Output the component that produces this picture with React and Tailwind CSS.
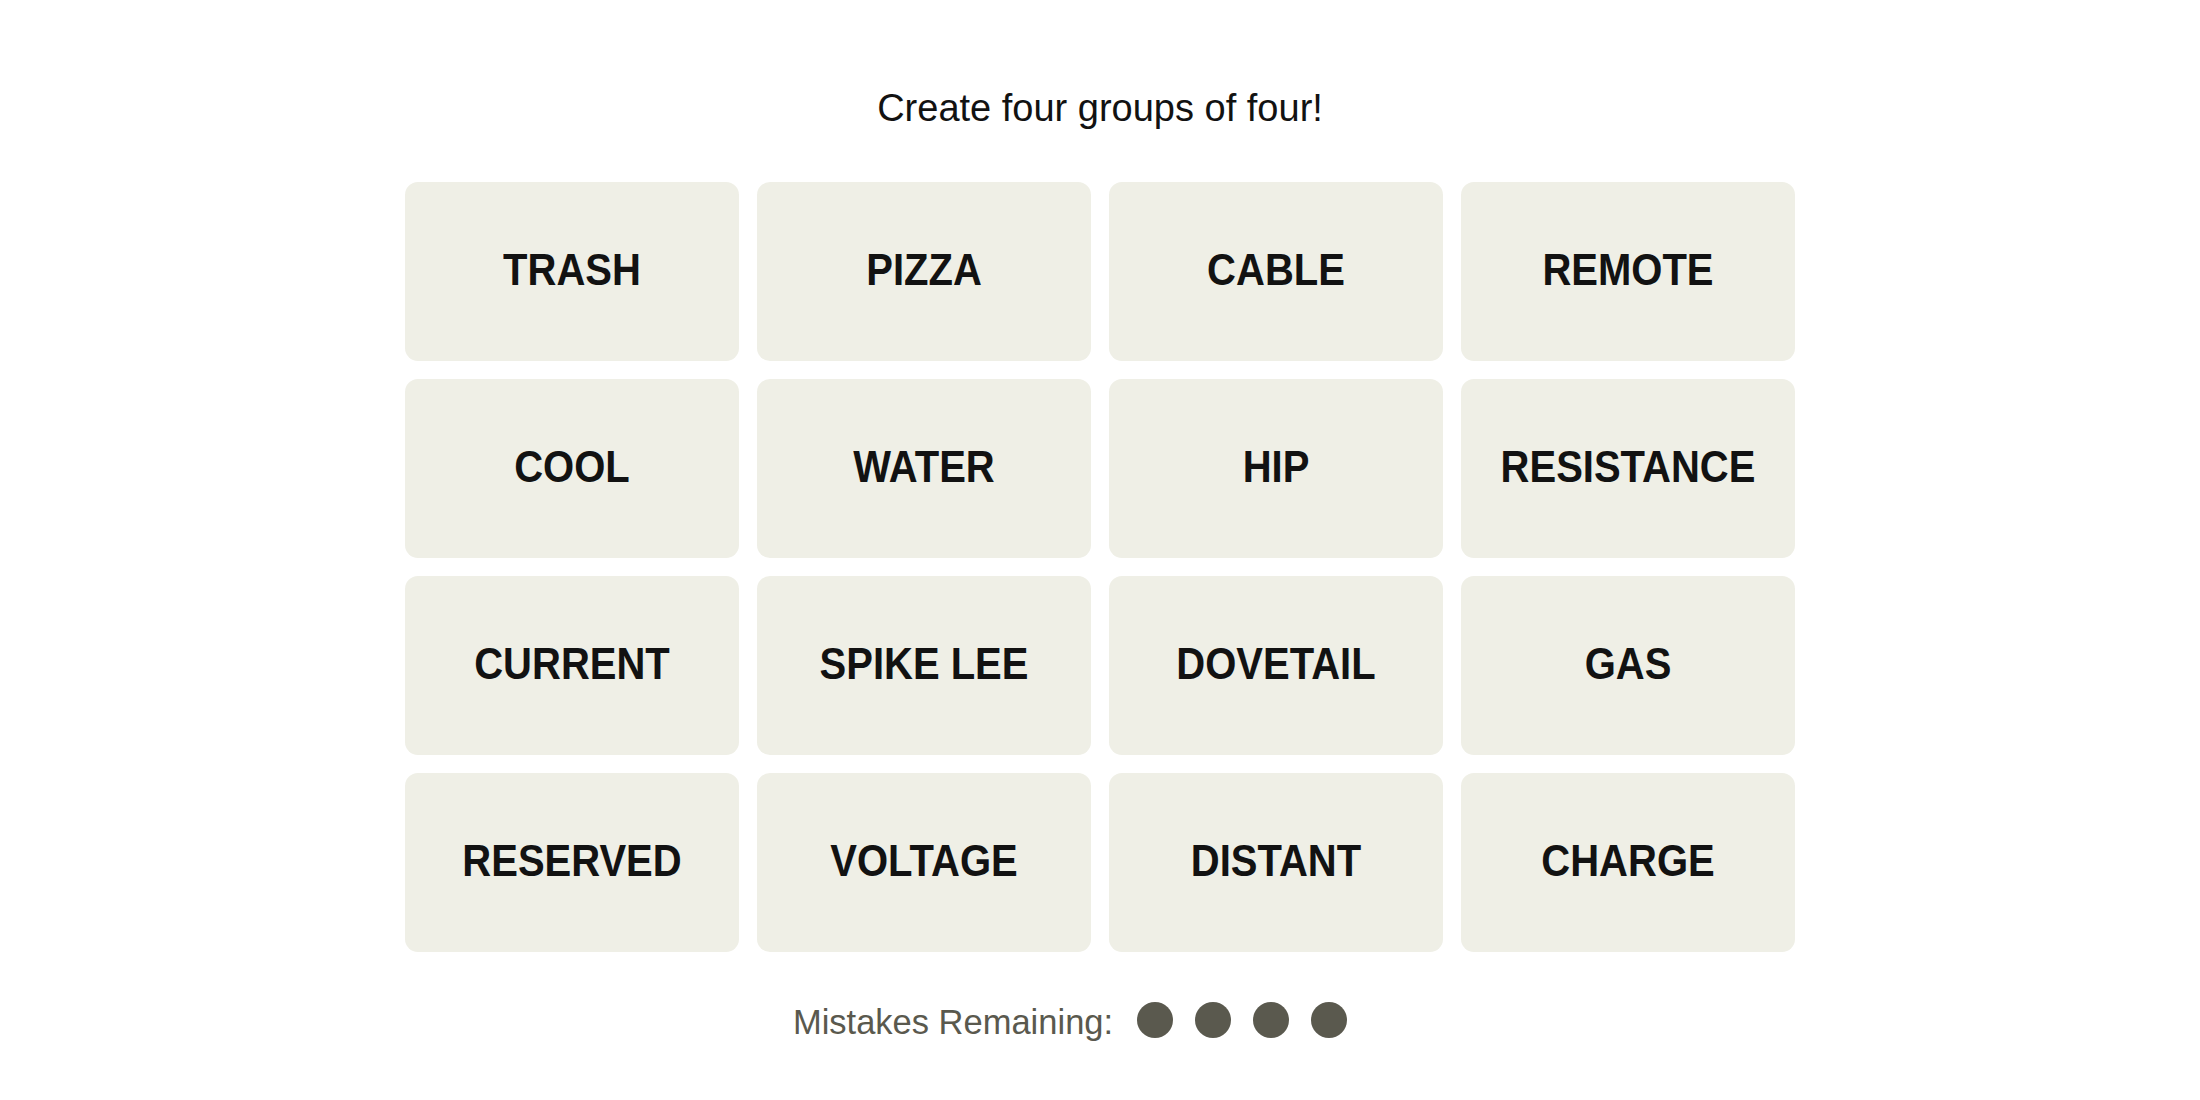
import React from "react";

const WORDS = [
  "TRASH", "PIZZA", "CABLE", "REMOTE",
  "COOL", "WATER", "HIP", "RESISTANCE",
  "CURRENT", "SPIKE LEE", "DOVETAIL", "GAS",
  "RESERVED", "VOLTAGE", "DISTANT", "CHARGE",
];

const Tile = ({ word }) => (
  <button className="h-[179px] w-[334px] pb-[5px] rounded-[13px] bg-[#efefe6] flex items-center justify-center">
    <span className="inline-block font-['Liberation_Sans',sans-serif] font-bold text-[40px] leading-none scale-y-[1.12] text-[#121212]">
      {word}
    </span>
  </button>
);

export default function App() {
  return (
    <div className="w-full min-h-screen bg-white flex flex-col items-center font-['Liberation_Sans',sans-serif]">
      <p className="mt-[89px] text-[38px] leading-none text-[#121212]">
        Create four groups of four!
      </p>

      <div className="mt-[55px] grid grid-cols-4 gap-x-[18px] gap-y-[18px]">
        {WORDS.map((w) => (
          <Tile key={w} word={w} />
        ))}
      </div>

      <div className="mt-[50px] flex items-center pr-[60px]">
        <span className="text-[34.5px] leading-none text-[#5a594e]">
          Mistakes Remaining:
        </span>
        <div className="ml-[24px] mb-[4px] flex items-center gap-[22px]">
          <span className="h-[36px] w-[36px] rounded-full bg-[#5a594e]" />
          <span className="h-[36px] w-[36px] rounded-full bg-[#5a594e]" />
          <span className="h-[36px] w-[36px] rounded-full bg-[#5a594e]" />
          <span className="h-[36px] w-[36px] rounded-full bg-[#5a594e]" />
        </div>
      </div>
    </div>
  );
}
